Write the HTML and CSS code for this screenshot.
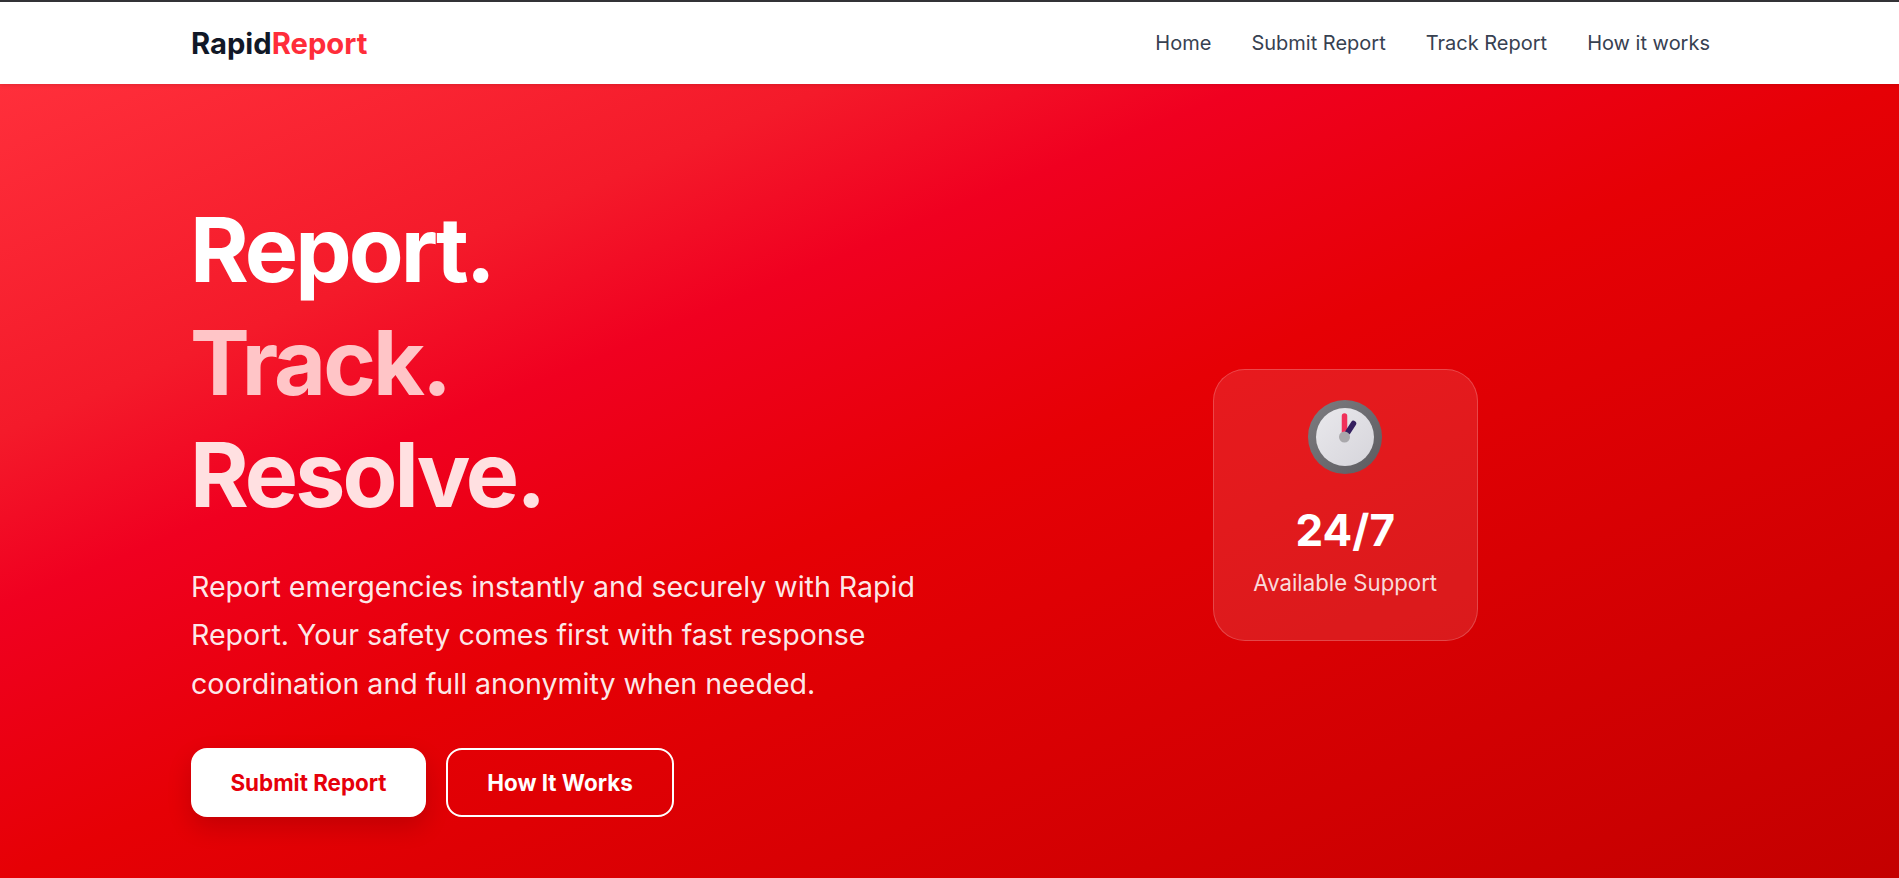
FILE: index.html
```html
<!DOCTYPE html>
<html lang="en">
<head>
    <meta charset="UTF-8" />
    <meta name="viewport" content="width=device-width, initial-scale=1.0">
    <title>RapidReport</title>
    <link rel="stylesheet" href="styles.css">
</head>
<body>

<header class="site-header">
    <nav class="navbar">
        <a href="#home" class="logo">Rapid<span class="logo-accent">Report</span></a>
        <div class="nav-links">
            <a href="#home" class="nav-link">Home</a>
            <a href="#submit" class="nav-link">Submit Report</a>
            <a href="#track" class="nav-link">Track Report</a>
            <a href="#how" class="nav-link">How it works</a>
        </div>
    </nav>
</header>

<main>
    <!-- Hero Section -->
    <section id="home" class="hero">
        <div class="hero-inner">
            <div class="hero-text">
                <h1 class="hero-title">
                    <span class="title-line">Report.</span>
                    <span class="title-line title-track">Track.</span>
                    <span class="title-line title-resolve">Resolve.</span>
                </h1>
                <p class="hero-copy">Report emergencies instantly and securely with Rapid Report. Your safety comes first with fast response coordination and full anonymity when needed.</p>
                <div class="hero-actions">
                    <a href="#submit" class="btn btn-primary">Submit Report</a>
                    <a href="#how" class="btn btn-outline">How It Works</a>
                </div>
            </div>
            <div class="hero-side">
                <div class="stat-card">
                    <svg class="stat-icon" viewBox="0 0 76 76" aria-hidden="true">
                        <defs>
                            <linearGradient id="rim" x1="0" y1="0" x2="1" y2="1">
                                <stop offset="0%" stop-color="#7d7c80"/>
                                <stop offset="100%" stop-color="#5c5b60"/>
                            </linearGradient>
                            <linearGradient id="face" x1="0" y1="0" x2="1" y2="1">
                                <stop offset="0%" stop-color="#e9e8ec"/>
                                <stop offset="100%" stop-color="#d6d5db"/>
                            </linearGradient>
                        </defs>
                        <circle cx="38" cy="38" r="37" fill="url(#rim)"/>
                        <circle cx="38" cy="38" r="29" fill="url(#face)"/>
                        <path d="M37.500 34 L37.500 17" stroke="#f0305a" stroke-width="5.500" stroke-linecap="round"/>
                        <path d="M41 33 L46.500 24.500" stroke="#35205f" stroke-width="5.500" stroke-linecap="round"/>
                        <circle cx="37.500" cy="38" r="5.500" fill="#a9a8ab"/>
                    </svg>
                    <div class="stat-value">24/7</div>
                    <div class="stat-label">Available Support</div>
                </div>
            </div>
        </div>
    </section>
</main>

</body>
</html>
```

FILE: styles.css
```css
/* Base Styles */
* {
    margin: 0;
    padding: 0;
    box-sizing: border-box;
}

html, body {
    height: 100%;
    overflow: hidden;
}

body {
    font-family: 'Inter', 'Liberation Sans', sans-serif;
    background: #fff;
    border-top: 2px solid #333336;
}

a {
    text-decoration: none;
}

/* Header */
.site-header {
    position: relative;
    z-index: 10;
    background: #fff;
    height: 82px;
    box-shadow: 0 1px 4px rgba(0, 0, 0, 0.12);
}

.navbar {
    height: 100%;
    padding: 0 189px 0 191px;
    display: flex;
    align-items: center;
    justify-content: space-between;
}

.logo {
    font-size: 29.2px;
    font-weight: 700;
    color: #111827;
}

.logo-accent {
    color: #ff2d3a;
}

.nav-links {
    display: flex;
    gap: 40px;
}

.nav-link {
    font-size: 20px;
    font-weight: 400;
    color: #374151;
}

/* Hero */
.hero {
    height: 794px;
    background: linear-gradient(to bottom right, #ff2f3b 0%, #f41a2a 22%, #f00020 33%, #e60005 50%, #c40000 100%);
}

.hero-inner {
    padding: 110px 189px 0 191px;
    display: grid;
    grid-template-columns: 1fr 1fr;
    gap: 60px;
}

.hero-title {
    font-size: 89.6px;
    font-weight: 700;
    line-height: 112.5px;
    letter-spacing: -0.033em;
    margin-left: -1px;
    color: #fff;
    margin-bottom: 31px;
}

.title-line {
    display: block;
}

.title-track {
    color: #ffc5c7;
}

.title-resolve {
    color: #ffe0e1;
}

.hero-copy {
    font-size: 28.55px;
    line-height: 48.6px;
    color: rgba(255, 255, 255, 0.92);
    margin-bottom: 39.5px;
}

.hero-actions {
    display: flex;
    gap: 20px;
}

.btn {
    height: 69px;
    display: flex;
    align-items: center;
    justify-content: center;
    font-size: 22.4px;
    font-weight: 700;
    border-radius: 16px;
}

.btn-primary {
    width: 235px;
    background: #fff;
    color: #e6000a;
    box-shadow: 0 10px 25px rgba(0, 0, 0, 0.15);
}

.btn-outline {
    width: 228px;
    color: #fff;
    border: 2px solid #fff;
}

/* Stat card */
.hero-side {
    display: flex;
    align-items: center;
    justify-content: center;
}

.stat-card {
    width: 265px;
    height: 272px;
    padding-top: 29px;
    text-align: center;
    background: rgba(255, 255, 255, 0.1);
    border: 1px solid rgba(255, 255, 255, 0.2);
    border-radius: 32px;
}

.stat-icon {
    display: block;
    width: 76px;
    height: 76px;
    margin: 0 auto 26px;
}

.stat-value {
    font-size: 44px;
    font-weight: 700;
    line-height: 58px;
    color: #fff;
    margin-bottom: 8px;
}

.stat-label {
    font-size: 22.2px;
    line-height: 32px;
    color: rgba(255, 255, 255, 0.85);
}
```
